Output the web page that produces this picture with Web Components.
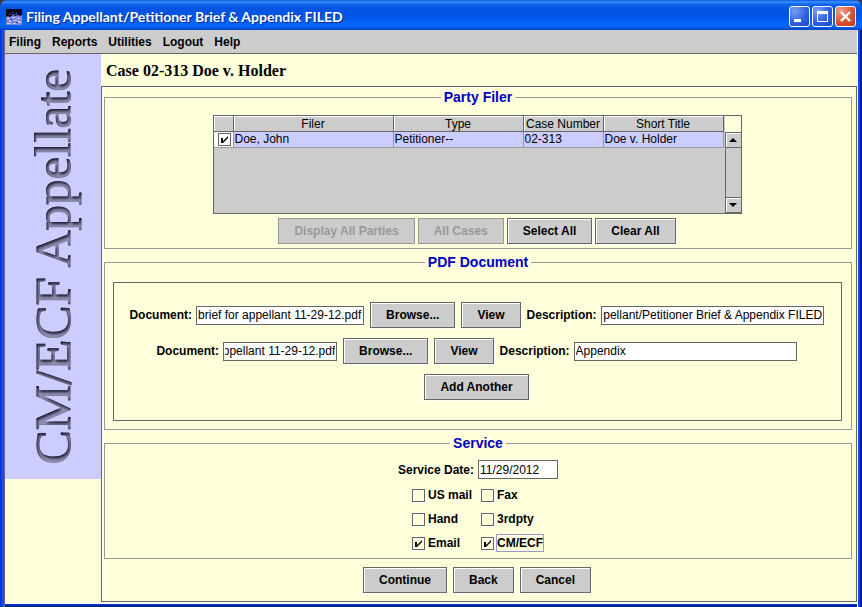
<!DOCTYPE html>
<html lang="en">
<head>
<meta charset="utf-8">
<title>Filing Appellant/Petitioner Brief &amp; Appendix FILED</title>
<style>
html,body{margin:0;height:100%}
body{background:#3a3a4a;font-family:"Liberation Sans",Arial,sans-serif;font-size:12px;line-height:16px;color:#000}
</style>
</head>
<body>
<app-window>
  <title-bar slot="title">Filing Appellant/Petitioner Brief &amp; Appendix FILED</title-bar>
  <menu-bar slot="menu"></menu-bar>
  <brand-strip slot="side">CM/ECF Appellate</brand-strip>
  <filing-form slot="main"></filing-form>
</app-window>
<script>
const define = (name, html, setup) => customElements.define(name, class extends HTMLElement {
  connectedCallback() {
    if (this.shadowRoot) return;
    const t = document.createElement('template');
    t.innerHTML = typeof html === 'function' ? html(this) : html;
    this.attachShadow({mode: 'open'}).append(t.content.cloneNode(true));
    if (setup) setup(this.shadowRoot, this);
  }
});

define('app-window', `
<style>
:host{display:flex;flex-direction:column;box-sizing:border-box;min-height:100vh;padding:0 5px 4px 5px;
 background:linear-gradient(90deg,#0831d9 0 1px,#0a4ce8 2px,#1a5ff0 3px,#0840d0 4px,#667 4px 5px,transparent 5px calc(100% - 5px),#fff 0 calc(100% - 4px),#0a4ce8 0 calc(100% - 2px),#001c9c 0),linear-gradient(0deg,#001a90 0 2px,#0840d8 4px,#0840d8);
 border-radius:8px 8px 0 0;overflow:hidden}
.body{flex:1;display:grid;grid-template-columns:96px minmax(0,1fr);background:#ffffdb;border-bottom:1px solid #fff}
::slotted([slot=title]){margin:0 -5px}
</style>
<slot name="title"></slot>
<slot name="menu"></slot>
<div class="body"><slot name="side"></slot><slot name="main"></slot></div>`);

define('title-bar', `
<style>
:host{display:flex;align-items:center;box-sizing:border-box;height:30px;padding:3px 6px 0;gap:4px;
 background:linear-gradient(180deg,#0a56e0 0,#3a93ff 2px,#1568f0 4px,#0454e0 8px,#0355e6 16px,#0566fb 24px,#0560f2 27px,#0341c0 30px);
 color:#fff;font:bold 14px/18px Lato,"Open Sans",sans-serif;text-shadow:1px 1px 1px #0a2a90}
.t{flex:1;white-space:nowrap;overflow:hidden}
.ctl{display:flex;gap:2px}
button{width:21px;height:21px;padding:0;border:1px solid #fff;border-radius:3px;display:grid;place-items:center;
 background:radial-gradient(circle at 25% 20%,#7aa0f5,#2f62e0 55%,#1848c8)}
button.x{background:radial-gradient(circle at 25% 20%,#f0a088,#dc5230 55%,#c03a18)}
svg{display:block}
</style>
<svg width="16" height="16" viewBox="0 0 16 16" aria-hidden="true"><path fill="#05051a" d="M0 0h16v16H0z"/><path fill="#7a86d8" d="M0 8l2-1 2 1 3-2 2 1 3-1 2 1 2-1v10H0z"/><path fill="#c5c8f4" d="M1 9h3v1H1zM6 8h3v1H6zM11 9h3v1h-3zM3 11h2v2H3zM8 11h3v1H8zM12 12h3v2h-3zM1 14h4v1H1zM7 14h3v1H7z"/><path fill="#3440a8" d="M3 4h1v2H3zM6 3h2v1H6zM10 3h1v2h-1zM4 10h2v1H4zM10 13h2v1h-2zM5 5h6v1H5z"/></svg>
<span class="t"><slot></slot></span>
<span class="ctl">
<button aria-label="Minimize"><svg width="19" height="19"><path fill="#fff" d="M4 12h7v3H4z"/></svg></button>
<button aria-label="Maximize"><svg width="19" height="19"><path fill="none" stroke="#fff" d="M4.500 5.500h10v9h-10z"/><path fill="#fff" d="M4 4h11v3H4z"/></svg></button>
<button class="x" aria-label="Close"><svg width="19" height="19"><path stroke="#fff" stroke-width="2.400" d="M5 5l9 9M14 5l-9 9"/></svg></button>
</span>`);

define('menu-bar', `
<style>
:host{display:flex;gap:11px;box-sizing:border-box;height:24px;padding:0 4px;align-items:center;background:#ccc;border-bottom:1px solid #666}
button{all:unset;font-weight:bold;cursor:default}
</style>
<button>Filing</button><button>Reports</button><button>Utilities</button><button>Logout</button><button>Help</button>`);

define('brand-strip', `
<style>
:host{display:flex;align-items:center;justify-content:center;align-self:start;height:425px;background:#ccccff}
span{writing-mode:vertical-rl;transform:rotate(180deg);font:51px/60px "Liberation Serif","Times New Roman",serif;white-space:nowrap;color:#9494b4;-webkit-text-stroke:1px #8484a6;filter:url(#bevel)}
svg{position:absolute}
</style>
<svg width="0" height="0" aria-hidden="true"><filter id="bevel" x="-5%" y="-5%" width="110%" height="110%" color-interpolation-filters="sRGB">
<feGaussianBlur in="SourceAlpha" stdDeviation="1.500" result="b"/><feOffset in="b" dx="-1" dy="-2" result="o"/>
<feComposite in="SourceAlpha" in2="o" operator="out" result="edge"/>
<feFlood flood-color="#14142c"/><feComposite in2="edge" operator="in" result="dark"/>
<feMerge><feMergeNode in="SourceGraphic"/><feMergeNode in="dark"/></feMerge></filter></svg>
<span><slot></slot></span>`);

define('swing-button', el => `
<style>
:host{display:inline-flex}
button{box-sizing:border-box;height:26px;padding:0 15px;font:bold 12px/16px "Liberation Sans",Arial,sans-serif;color:#000;
 background:#ccc;border:1px solid #666;box-shadow:inset 1px 1px #fff,1px 1px #fff;white-space:nowrap}
button:disabled{color:#999;border-color:#999;box-shadow:inset 1px 1px #ccc}
</style>
<button type="button" ${el.hasAttribute('disabled') ? 'disabled' : ''}><slot></slot></button>`);

define('swing-field', el => `
<style>
:host{display:flex;align-items:center;gap:4px}
label{font-weight:bold;white-space:nowrap}
input{box-sizing:border-box;width:${el.getAttribute('width')}px;height:19px;padding:0 1px;border:1px solid #666;border-radius:0;background:#fff;font:12px/16px "Liberation Sans",Arial,sans-serif;color:#000;outline:0}
</style>
<label for="i">${el.getAttribute('label')}</label><input id="i" type="text">`, (root, el) => {
  const i = root.getElementById('i');
  i.value = el.getAttribute('value');
  i.scrollLeft = i.scrollWidth;
});

define('swing-check', el => `
<style>
:host{display:flex}
label{display:flex;align-items:center;gap:2px;font-weight:bold;white-space:nowrap}
input{appearance:none;box-sizing:border-box;width:13px;height:13px;margin:0;border:1px solid #666;box-shadow:inset 1px 1px #fff,1px 1px #fff;outline:0}
input:checked{background:no-repeat center/9px 9px url("data:image/svg+xml,%3Csvg xmlns='http://www.w3.org/2000/svg' viewBox='0 0 9 9'%3E%3Cpath d='M1 3h2v3L8 1v2L3 8H1z'/%3E%3C/svg%3E")}
span{border:1px solid transparent}
:host([focused]) span{border-color:#9999cc}
:host([bare]) input{background-color:#fff}
:host([bare]) span{display:none}
</style>
<label><input type="checkbox" ${el.hasAttribute('checked') ? 'checked' : ''} ${el.hasAttribute('bare') ? 'aria-label="Select row"' : ''}><span><slot></slot></span></label>`);

define('group-box', el => `
<style>
:host{display:block}
fieldset{margin:0;padding:0;border:1px solid #999;min-width:0}
legend{margin:0 auto;padding:0 3px;color:#0000c4;font:bold 14px/20px "Liberation Sans",Arial,sans-serif}
</style>
<fieldset><legend>${el.getAttribute('heading')}</legend><slot></slot></fieldset>`);

define('party-table', `
<style>
:host{display:flex;box-sizing:border-box;width:529px;height:99px;border:1px solid #666;background:#ccc}
.pane{flex:1;min-width:0}
table{border-collapse:separate;border-spacing:0;table-layout:fixed;width:510px}
th,td{box-sizing:border-box;padding:0 0 0 1px;height:16px;line-height:15px;text-align:left;white-space:nowrap}
th{font-weight:normal;text-align:center;border-right:1px solid #666;border-bottom:1px solid #666;box-shadow:inset 1px 1px #fff;padding:1px 0 0;line-height:14px}
td{background:#ccccff;border-right:1px solid #999;border-bottom:1px solid #999}
td:first-child{background:#fff;padding:0 0 0 4px}
.bar{display:flex;flex-direction:column;width:16px}
.corner{height:16px;background:#ffffdb}
.track{flex:1;border-left:1px solid #666}
button{height:16px;padding:0;border:1px solid #666;border-right:0;background:#ccc;box-shadow:inset 1px 1px #fff;display:grid;place-items:center}
</style>
<div class="pane"><table><colgroup><col style="width:20px"><col style="width:160px"><col style="width:130px"><col style="width:80px"><col></colgroup>
<thead><tr><th></th><th>Filer</th><th>Type</th><th>Case Number</th><th>Short Title</th></tr></thead>
<tbody><tr><td><swing-check bare checked></swing-check></td><td>Doe, John</td><td>Petitioner--</td><td>02-313</td><td>Doe v. Holder</td></tr></tbody></table></div>
<div class="bar"><div class="corner"></div>
<button aria-label="Scroll up"><svg width="8" height="4"><path d="M4 0L8 4H0z"/></svg></button><div class="track"></div>
<button aria-label="Scroll down"><svg width="8" height="4"><path d="M0 0h8L4 4z"/></svg></button></div>`);

define('filing-form', `
<style>
:host{display:flex;flex-direction:column;min-width:0;padding-bottom:1px}
h1{margin:0;padding:9px 5px 7px;font:bold 16px/16px "Liberation Serif","Times New Roman",serif}
main{flex:1;display:flex;flex-direction:column;border:1px solid #666;padding:0 4px 0 2px;box-shadow:inset 1px 1px #fff}
.row{display:flex;justify-content:center;align-items:center}
.party{flex-direction:column;padding:8px 0 4px}
.party .row{gap:3px;padding-top:4px}
.party{margin-right:2px}
.docs{margin:10px 9px 8px 8px;border:1px solid #666;height:139px;box-sizing:border-box;padding:19px 2px 0 0;display:flex;flex-direction:column;gap:10px}
.docs .row{gap:6px}
.service{flex-direction:column;padding-bottom:6px}
.date{padding:7px 0}
.checks{display:grid;grid-template-columns:auto auto;gap:6px 8px}
.checks swing-check{height:18px}
.actions{gap:6px;padding:8px 0;margin-right:2px}
group-box+group-box{margin-top:3px}
</style>
<h1>Case 02-313 Doe v. Holder</h1>
<main>
<group-box heading="Party Filer"><div class="row party"><party-table></party-table>
<div class="row"><swing-button disabled>Display All Parties</swing-button><swing-button disabled>All Cases</swing-button><swing-button>Select All</swing-button><swing-button>Clear All</swing-button></div></div></group-box>
<group-box heading="PDF Document"><div class="docs">
<div class="row"><swing-field label="Document:" width="168" value="brief for appellant 11-29-12.pdf"></swing-field><swing-button>Browse...</swing-button><swing-button>View</swing-button><swing-field label="Description:" width="223" value="Appellant/Petitioner Brief &amp; Appendix FILED"></swing-field></div>
<div class="row"><swing-field label="Document:" width="114" value="brief for appellant 11-29-12.pdf"></swing-field><swing-button>Browse...</swing-button><swing-button>View</swing-button><swing-field label="Description:" width="223" value="Appendix"></swing-field></div>
<div class="row"><swing-button>Add Another</swing-button></div>
</div></group-box>
<group-box heading="Service"><div class="row service">
<swing-field class="date" label="Service Date:" width="80" value="11/29/2012"></swing-field>
<div class="checks"><swing-check>US mail</swing-check><swing-check>Fax</swing-check><swing-check>Hand</swing-check><swing-check>3rdpty</swing-check><swing-check checked>Email</swing-check><swing-check checked focused>CM/ECF</swing-check></div>
</div></group-box>
<div class="row actions"><swing-button>Continue</swing-button><swing-button>Back</swing-button><swing-button>Cancel</swing-button></div>
</main>`);
</script>
</body>
</html>
